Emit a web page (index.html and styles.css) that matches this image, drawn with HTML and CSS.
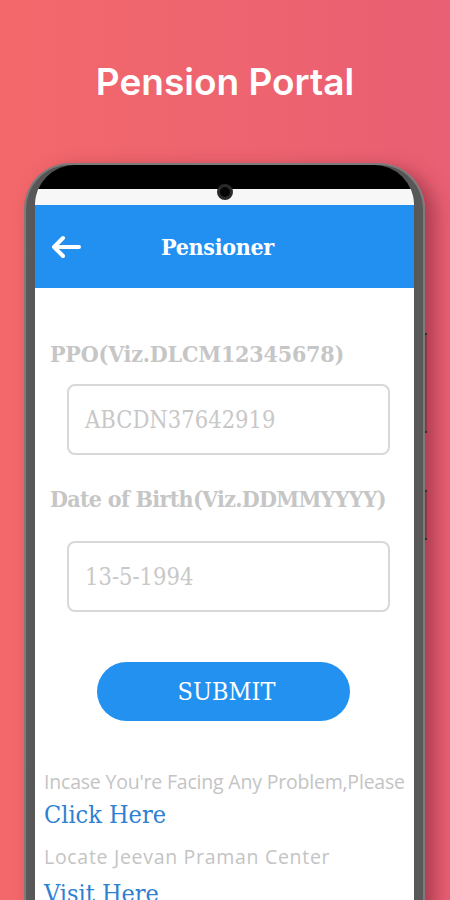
FILE: index.html
```html
<!DOCTYPE html>
<html lang="en">
<head>
    <meta charset="UTF-8">
    <meta name="viewport" content="width=device-width, initial-scale=1.0">
    <title>Pension Portal</title>
    <link rel="stylesheet" href="styles.css">
</head>
<body>
    <div class="page">
        <h1 class="title">Pension Portal</h1>

        <div class="phone">
            <span class="side-btn side-btn-power"></span>
            <span class="side-btn side-btn-volume"></span>
            <div class="display">
                <div class="bezel"><span class="camera"></span></div>
                <div class="screen">
                    <div class="status-bar"></div>
                    <header class="appbar">
                        <svg class="back-icon" width="30" height="24" viewBox="0 0 30 24">
                            <path d="M12 3 L3 12 L12 21 M3 12 H28" fill="none" stroke="#fff" stroke-width="4" stroke-linecap="round" stroke-linejoin="round"/>
                        </svg>
                        <h2 class="appbar-title">Pensioner</h2>
                        <span class="appbar-spacer"></span>
                    </header>

                    <div class="form">
                        <label class="field-label label-ppo">PPO(Viz.DLCM12345678)</label>
                        <div class="field field-ppo">ABCDN37642919</div>

                        <label class="field-label label-dob">Date of Birth(Viz.DDMMYYYY)</label>
                        <div class="field field-dob">13-5-1994</div>

                        <button class="submit-button">SUBMIT</button>

                        <p class="help-text help-first">Incase You're Facing Any Problem,Please</p>
                        <a class="help-link link-click" href="#">Click Here</a>
                        <p class="help-text help-second">Locate Jeevan Praman Center</p>
                        <a class="help-link link-visit" href="#">Visit Here</a>
                    </div>
                </div>
            </div>
        </div>
    </div>
</body>
</html>
```
FILE: styles.css
```css
body {
    margin: 0;
    padding: 0;
    font-family: "Open Sans", sans-serif;
}
.page {
    width: 450px;
    height: 900px;
    overflow: hidden;
    background: linear-gradient(90deg, #f3686a 0%, #ee646f 50%, #e95f73 100%);
}
.title {
    margin: 0;
    padding-top: 64px;
    font-family: "Inter", sans-serif;
    font-weight: 600;
    font-size: 37px;
    line-height: 36px;
    color: #fff;
    text-align: center;
}

/* phone mockup */
.phone {
    position: relative;
    width: 401px;
    height: 760px;
    box-sizing: border-box;
    margin: 63px 0 0 24px;
    padding: 0 9px;
    border: 2px solid #7c7c7c;
    border-bottom: none;
    border-radius: 46px 46px 0 0;
    background: linear-gradient(90deg, #5a5a5a, #3e3e3e 25%, #3e3e3e 75%, #5a5a5a);
    box-shadow: 10px 6px 18px rgba(110, 25, 45, 0.5);
}
.side-btn {
    position: absolute;
    right: -4px;
    width: 2px;
    border-top: 2px solid #3a2a2e;
    border-bottom: 2px solid #3a2a2e;
    background: rgba(90, 40, 50, 0.4);
}
.side-btn-power {
    top: 168px;
    height: 96px;
}
.side-btn-volume {
    top: 325px;
    height: 46px;
}
.display {
    height: 100%;
    background: #000;
    border-radius: 40px 40px 0 0;
    overflow: hidden;
}
.bezel {
    position: relative;
    height: 24px;
}
.camera {
    position: absolute;
    top: 19px;
    left: 50%;
    width: 16px;
    height: 16px;
    margin-left: -8px;
    box-sizing: border-box;
    border: 3px solid #2a2a2a;
    border-radius: 50%;
    background: #050505;
    z-index: 2;
}
.screen {
    height: 100%;
    background: #fff;
}
.status-bar {
    height: 16px;
    background: #f7f7f7;
}

/* app bar */
.appbar {
    display: flex;
    align-items: center;
    height: 83px;
    padding: 0 0 0 16px;
    background: #2190f1;
}
.back-icon {
    flex: none;
}
.appbar-title {
    flex: 1;
    margin: 0;
    font-family: "DejaVu Serif", serif;
    font-stretch: condensed;
    font-weight: bold;
    font-size: 23px;
    letter-spacing: -0.3px;
    color: #fff;
    text-align: center;
}
.appbar-spacer {
    width: 60px;
}

/* form */
.form {
    display: flex;
    flex-direction: column;
    align-items: flex-start;
}
.field-label {
    margin-left: 15px;
    font-family: "DejaVu Serif", serif;
    font-stretch: condensed;
    font-weight: bold;
    font-size: 23px;
    line-height: 25px;
    letter-spacing: -0.2px;
    white-space: nowrap;
    color: #c6c6c6;
}
.label-ppo {
    margin-top: 53px;
}
.label-dob {
    margin-top: 31px;
    letter-spacing: -0.7px;
}
.field {
    display: flex;
    align-items: center;
    width: 323px;
    height: 71px;
    box-sizing: border-box;
    margin-left: 32px;
    padding-left: 16px;
    border: 2px solid #d8d8d8;
    border-radius: 8px;
    font-family: "DejaVu Serif", serif;
    font-stretch: condensed;
    font-size: 23.5px;
    color: #c8c8c8;
}
.field-ppo {
    margin-top: 18px;
}
.field-dob {
    margin-top: 30px;
}
.submit-button {
    width: 253px;
    height: 59px;
    margin: 50px 0 0 62px;
    padding: 0 0 0 6px;
    border: none;
    border-radius: 30px;
    background-color: #2291f0;
    color: #fff;
    font-family: "DejaVu Serif", serif;
    font-stretch: condensed;
    font-size: 25px;
    cursor: pointer;
}
.help-text {
    margin: 0 0 0 9px;
    font-family: "Open Sans", sans-serif;
    font-size: 19.5px;
    line-height: 21px;
    color: #c4c4c4;
    white-space: nowrap;
}
.help-first {
    margin-top: 50px;
    letter-spacing: -0.2px;
}
.help-second {
    margin-top: 18px;
    letter-spacing: 0.7px;
}
.help-link {
    margin-left: 9px;
    font-family: "DejaVu Serif", serif;
    font-stretch: condensed;
    font-size: 25px;
    line-height: 27px;
    color: #2e80d2;
    text-decoration: none;
}
.link-click {
    margin-top: 9px;
}
.link-visit {
    margin-top: 13px;
}
```
